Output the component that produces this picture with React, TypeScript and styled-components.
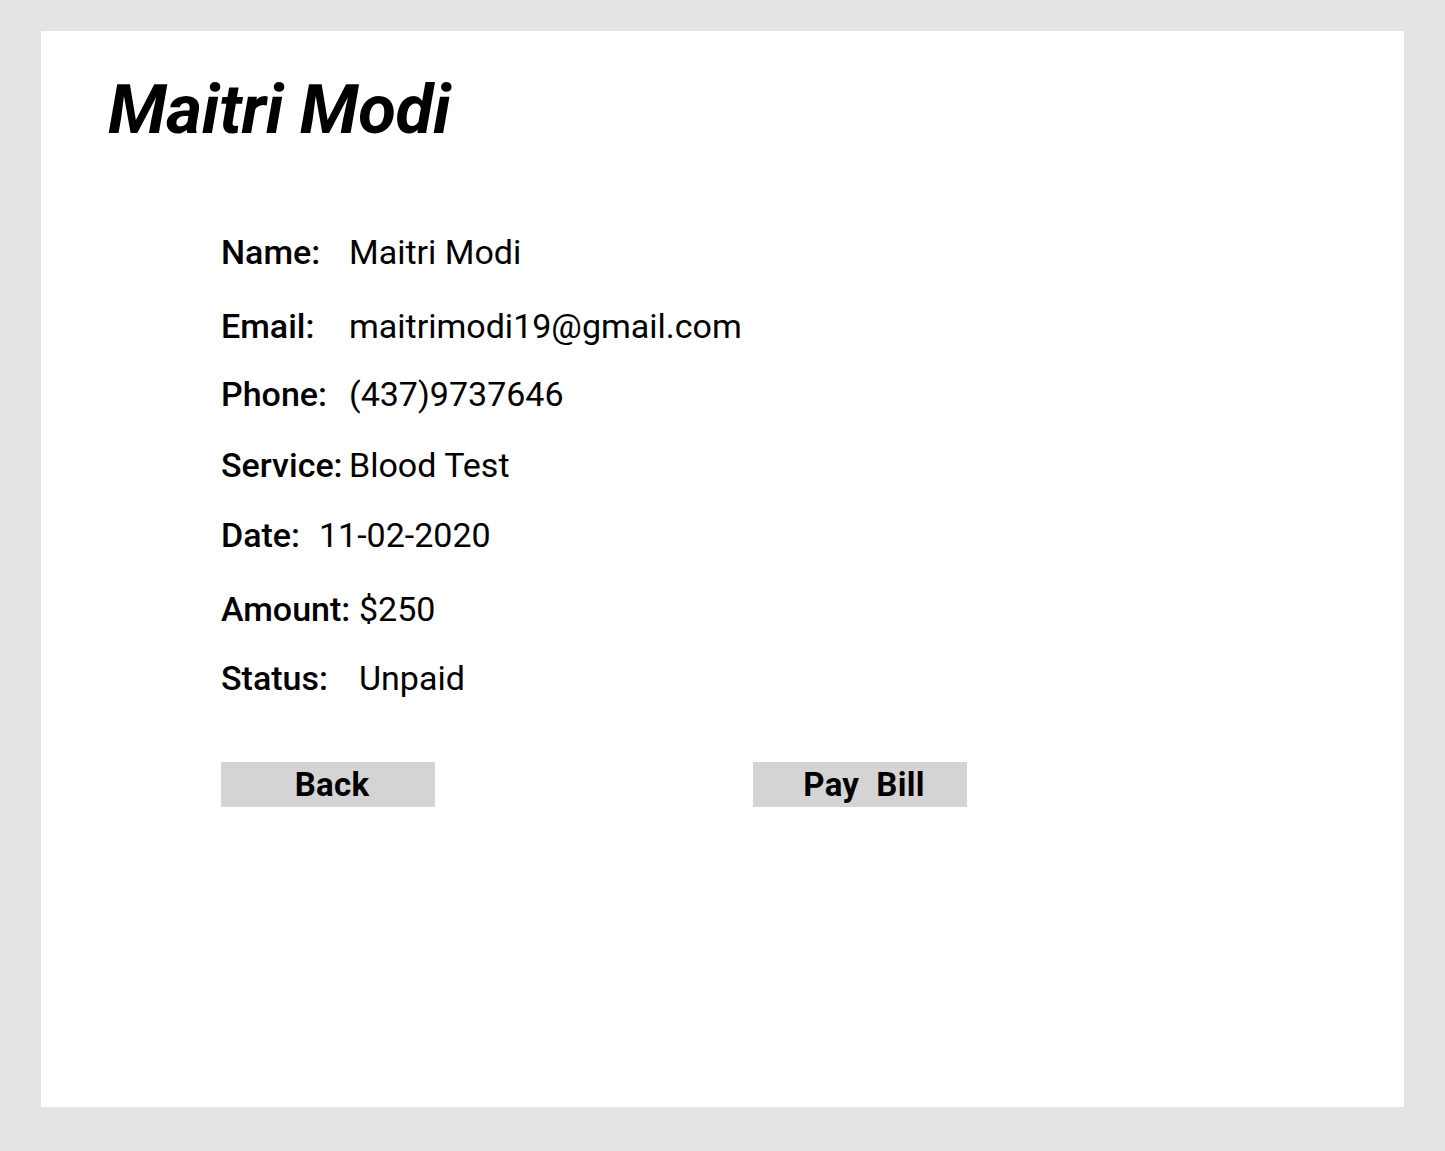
import React from "react";
import styled, { createGlobalStyle } from "styled-components";

const Global = createGlobalStyle`
  html, body {
    margin: 0;
    padding: 0;
    background: #e4e4e4;
    font-family: Roboto, "Liberation Sans", Arial, sans-serif;
    color: #000;
  }
`;

const Page = styled.div`
  padding: 31px 41px 44px 41px;
  box-sizing: border-box;
  min-height: 1151px;
`;

const Card = styled.main`
  background: #ffffff;
  height: 1076px;
  box-sizing: border-box;
  padding: 38px 0 0 67px;
  display: flex;
  flex-direction: column;
`;

const Title = styled.h1`
  margin: 0;
  font-size: 69px;
  line-height: 81px;
  font-weight: 700;
  font-style: italic;
  letter-spacing: -0.3px;
`;

const Details = styled.section`
  margin: 82px 0 0 113px;
  display: flex;
  flex-direction: column;
`;

const Row = styled.div<{ $gap: number; $labelWidth: number }>`
  display: grid;
  grid-template-columns: ${(p) => p.$labelWidth}px auto;
  margin-top: ${(p) => p.$gap}px;
  font-size: 34px;
  line-height: 40px;
  height: 40px;
  white-space: nowrap;
`;

const Label = styled.span`
  font-weight: 500;
`;

const Value = styled.span`
  font-weight: 400;
`;

const Actions = styled.div`
  display: flex;
  gap: 318px;
  margin-top: 64px;
`;

const Button = styled.button`
  width: 214px;
  height: 45px;
  border: none;
  background: #d4d4d4;
  font-family: Roboto, "Liberation Sans", Arial, sans-serif;
  font-size: 33px;
  font-weight: 700;
  letter-spacing: 0.3px;
  color: #000;
  padding: 0 0 0 8px;
  margin: 0;
  white-space: pre;
  line-height: 45px;
`;

const rows = [
  { label: "Name:", value: "Maitri Modi", gap: 0, w: 128 },
  { label: "Email:", value: "maitrimodi19@gmail.com", gap: 34, w: 128 },
  { label: "Phone:", value: "(437)9737646", gap: 28, w: 128 },
  { label: "Service:", value: "Blood Test", gap: 31, w: 128 },
  { label: "Date:", value: "11-02-2020", gap: 30, w: 98 },
  { label: "Amount:", value: "$250", gap: 34, w: 138 },
  { label: "Status:", value: "Unpaid", gap: 29, w: 138 },
];

export default function App() {
  return (
    <>
      <Global />
      <Page>
        <Card>
          <Title>Maitri Modi</Title>
          <Details>
            {rows.map((r) => (
              <Row key={r.label} $gap={r.gap} $labelWidth={r.w}>
                <Label>{r.label}</Label>
                <Value>{r.value}</Value>
              </Row>
            ))}
            <Actions>
              <Button>Back</Button>
              <Button>{"Pay  Bill"}</Button>
            </Actions>
          </Details>
        </Card>
      </Page>
    </>
  );
}
